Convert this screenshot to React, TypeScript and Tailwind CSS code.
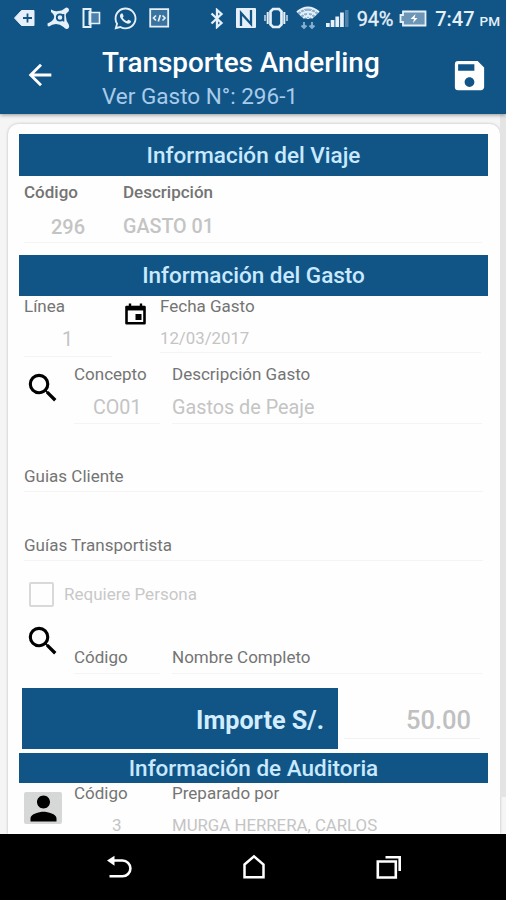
import React from 'react';
import clsx from 'clsx';
import { MdArrowBack, MdSave, MdSearch, MdPerson } from 'react-icons/md';
import { FaWhatsapp } from 'react-icons/fa';

interface FieldProps {
  label: string;
  value?: string;
  className?: string;
  labelClassName?: string;
  valueClassName?: string;
}

const Field: React.FC<FieldProps> = ({ label, value, className, labelClassName, valueClassName }) => (
  <div className={clsx('flex flex-col border-b border-[#f4f4f4] whitespace-nowrap', className)}>
    <span className={clsx('text-[17px] leading-5 text-[#747474]', labelClassName)}>{label}</span>
    {value && <span className={clsx('leading-6 text-[#c4c4c4]', valueClassName)}>{value}</span>}
  </div>
);

const SectionTitle: React.FC<{ title: string; className?: string }> = ({ title, className }) => (
  <h2
    className={clsx(
      'flex items-center justify-center bg-[#115587] pt-px text-[22.5px] font-medium text-[#c9e9ff] whitespace-nowrap',
      className
    )}
  >
    {title}
  </h2>
);

const StatusBar: React.FC = () => (
  <div className="flex h-9 items-center justify-between pl-[14px] pr-[6px] text-[#e6f0fa]">
    <div className="flex items-center">
      <svg className="h-5 w-[21px]" viewBox="0 0 21 20" fill="currentColor">
        <path d="M7.500 2.500H20v15H7.500L0.500 10z" stroke="currentColor" strokeLinejoin="round" />
        <path d="M13.500 5.500v9M9 10h9" stroke="#115587" strokeWidth="1.800" />
      </svg>
      <svg className="ml-[11px] h-6 w-6" viewBox="0 0 24 24">
        <path
          d="M5 3.500Q9 6 12 5Q16 5 18 3Q20 0.500 22 2Q24 4 22 6Q19 8 20 11Q20 15 22.500 18Q24 21 22 22.500Q20 24 17.500 21Q14 18 10 18Q6 18 3 20.500Q1 20 1.500 17.500Q7 15 8 12Q9 9 5 6z"
          fill="currentColor"
        />
        <circle cx="14" cy="11.500" r="3.200" fill="none" stroke="#115587" strokeWidth="1.800" />
        <path d="M17.500 8v7.500" stroke="#115587" strokeWidth="1.600" />
      </svg>
      <svg className="ml-3 h-[22px] w-[19px]" viewBox="0 0 19 22" fill="none" stroke="currentColor" strokeWidth="2">
        <path d="M8.500 5V2H1.500v18h7v-3" />
        <path d="M8.500 5.500h9v11h-9z" fill="#4a80ab" strokeWidth="1.600" />
        <path d="M7.500 4v14" />
      </svg>
      <FaWhatsapp className="ml-3 h-[25px] w-[25px]" />
      <svg className="ml-[11px] h-5 w-[21px]" viewBox="0 0 21 20" fill="none" stroke="currentColor" strokeWidth="1.800">
        <path d="M1.200 1.200h18v17.500h-18z" fill="#3b739f" />
        <path d="M7 7.500L4.500 10 7 12.500M13.500 7.500L16 10l-2.500 2.500M11.300 7l-2 6.500" strokeWidth="1.700" />
      </svg>
    </div>
    <div className="flex items-center">
      <svg className="h-[21px] w-[14px]" viewBox="0 0 14 21" fill="none" stroke="currentColor" strokeWidth="2.300">
        <path d="M1.500 5.500l10 9.500L7 19V2L11.500 6l-10 9.500" />
      </svg>
      <svg className="ml-[12px] h-5 w-5" viewBox="0 0 20 20">
        <rect width="20" height="20" rx="1" fill="currentColor" />
        <path d="M5 18V5l10 11V2" fill="none" stroke="#115587" strokeWidth="2.300" />
      </svg>
      <svg className="ml-[8px] h-[22px] w-6" viewBox="0 0 24 22" fill="none" stroke="currentColor">
        <path d="M9 2h6l2.500 2.500v13L15 20H9l-2.500-2.500v-13z" strokeWidth="2.700" />
        <path d="M3.700 5v12M20.300 5v12" strokeWidth="2" />
        <path d="M1 8v6M23 8v6" stroke="#a8c6de" strokeWidth="1.800" />
      </svg>
      <svg className="ml-[8px] h-6 w-6" viewBox="0 0 24 24" fill="none" stroke="currentColor">
        <path
          d="M0.500 6Q12-4 23.500 6L19 10.500Q16 13 12 13Q8 13 5 10.500z"
          fill="#8db1cd"
          stroke="none"
        />
        <path d="M1 6Q12-3 23 6M4 9Q12 2.500 20 9M7 12Q12 7.500 17 12" strokeWidth="1.800" />
        <path d="M3 4l9 9 9-9M7 3l8 8M17 3L9 11" strokeWidth="0.900" />
        <path d="M8 16v6M5.500 19.500L8 22l2.500-2.500M16 16v6M13.500 19.500L16 22l2.500-2.500" stroke="#86afd0" strokeWidth="1.900" />
      </svg>
      <svg className="ml-[6px] h-[18px] w-[23px]" viewBox="0 0 23 18" fill="currentColor">
        <path d="M0 14h3.700v4H0zM4.700 11h3.700v7H4.700zM9.400 7.500h3.700V18H9.400zM14.100 3.500h3.700V18h-3.700z" />
        <path d="M19 1h3.500v17H19z" fill="#4f82a9" />
      </svg>
      <span className="ml-[8px] pt-px text-[20px] leading-6 tracking-[-0.2px] [-webkit-text-stroke:0.3px]">94%</span>
      <svg className="ml-[6px] h-[17px] w-[28px]" viewBox="0 0 28 17">
        <path d="M4 1.500h22.500v14H4v-3.500H1.500V5H4z" fill="#6d95b5" stroke="currentColor" strokeWidth="1.800" />
        <path d="M16.500 4L11.500 9H15l-1 4L18.500 8h-3z" fill="#fff" />
      </svg>
      <span className="ml-[8px] pt-px text-[20px] font-medium leading-6">7:47</span>
      <span className="ml-[5px] pt-[5px] text-[13.500px] font-medium leading-5">PM</span>
    </div>
  </div>
);

const NavigationBar: React.FC = () => (
  <nav className="flex h-[66px] shrink-0 items-center justify-between bg-black pl-[106px] pr-[104px] text-white">
    <svg className="h-6 w-[26px]" viewBox="0 0 26 24" fill="none" stroke="currentColor" strokeWidth="2.600">
      <path d="M6 5.500h10.500a7.800 7.800 0 0 1 0 15.800H3.500" />
      <path d="M1 5.500L8.500 0.700v10z" fill="currentColor" stroke="none" />
    </svg>
    <svg className="h-[26px] w-6" viewBox="0 0 24 26" fill="none" stroke="currentColor" strokeWidth="2.500">
      <path d="M2.500 10.500L12 2.300l9.500 8.200v12.700h-19z" />
    </svg>
    <svg className="h-6 w-[26px]" viewBox="0 0 26 24" fill="none" stroke="currentColor" strokeWidth="2.600">
      <path d="M1.800 6.500h18v16h-18z" />
      <path d="M9.500 2.200h14.200V16" />
    </svg>
  </nav>
);

const App: React.FC = () => {
  return (
    <div className="flex h-[900px] w-[506px] flex-col overflow-hidden bg-[#f5f5f5] font-['Roboto',sans-serif]">
      <header className="z-10 h-[114px] shrink-0 bg-[#115587] shadow-[0_1px_4px_rgba(0,0,0,0.4)]">
        <StatusBar />
        <div className="flex h-[78px] items-center pl-[23px] pr-[17px]">
          <MdArrowBack className="h-[34px] w-[34px] text-white" />
          <div className="ml-[45px] flex flex-1 flex-col whitespace-nowrap pt-[7px]">
            <h1 className="text-[27.900px] font-medium leading-[34px] text-white">Transportes Anderling</h1>
            <p className="text-[22.500px] leading-[32px] text-[#a9cbea]">Ver Gasto N°: 296-1</p>
          </div>
          <MdSave className="h-[39px] w-[39px] text-white" />
        </div>
      </header>

      <div className="flex min-h-0 flex-1">
        <main className="mt-[10px] ml-[8px] w-[492px] overflow-hidden rounded-t-[10px] bg-[#fefefe] pt-[10px] pr-3 pl-[11px] shadow-[0_0_3px_rgba(0,0,0,0.25)]">
          <SectionTitle title="Información del Viaje" className="h-[42px]" />
          <div className="flex h-[79px] pl-[5px] pt-[6px]">
            <Field
              label="Código"
              value="296"
              className="h-[61px] w-[99px] gap-[13px]"
              labelClassName="font-medium"
              valueClassName="pl-[27px] text-[20px] font-medium"
            />
            <Field
              label="Descripción"
              value="GASTO 01"
              className="h-[61px] w-[359px] gap-[13px]"
              labelClassName="font-medium"
              valueClassName="text-[19.700px] font-medium"
            />
          </div>

          <SectionTitle title="Información del Gasto" className="h-[41px]" />
          <div className="flex h-[68px] pl-[5px]">
            <Field
              label="Línea"
              value="1"
              className="h-[61px] w-[88px] gap-[12px]"
              valueClassName="pl-[38px] text-[19.700px]"
            />
            <svg className="ml-[13px] mt-[7px] h-[22px] w-[21px] text-black" viewBox="0 0 21 22" fill="none" stroke="currentColor">
              <path d="M1.500 4h18v16.300h-18z" strokeWidth="2.600" strokeLinejoin="round" />
              <path d="M1 5.200h19" strokeWidth="4.500" />
              <path d="M5 0.500v4M16 0.500v4" strokeWidth="2.400" />
              <path d="M10.500 11h6v6h-6z" fill="currentColor" stroke="none" />
            </svg>
            <Field
              label="Fecha Gasto"
              value="12/03/2017"
              className="ml-[14px] h-[57px] w-[321px] gap-[10px]"
              valueClassName="text-[16.800px]"
            />
          </div>
          <div className="flex h-[102px] pl-[5px]">
            <MdSearch className="mt-[5px] h-[38px] w-[38px] text-black" />
            <Field
              label="Concepto"
              value="CO01"
              className="ml-[12px] h-[60px] w-[86px] gap-[12px]"
              valueClassName="pl-[19px] text-[19.700px]"
            />
            <Field
              label="Descripción Gasto"
              value="Gastos de Peaje"
              className="ml-[12px] h-[60px] w-[310px] gap-[12px]"
              valueClassName="text-[19.800px]"
            />
          </div>
          <div className="flex h-[115px] flex-col gap-[43px] pl-[5px]">
            <Field label="Guias Cliente" className="h-[26px] w-[459px]" />
            <Field label="Guías Transportista" className="h-[26px] w-[459px]" />
          </div>
          <label className="flex h-[27px] items-center pl-[10px]">
            <span className="h-[25px] w-[25px] rounded-xs border-2 border-[#d9d9d9]" />
            <span className="ml-[10px] text-[17px] text-[#c8c8c8]">Requiere Persona</span>
          </label>
          <div className="flex h-[80px] pl-[5px] pt-[14px]">
            <MdSearch className="h-[38px] w-[38px] text-black" />
            <Field label="Código" className="ml-[12px] mt-[25px] h-[27px] w-[86px]" />
            <Field label="Nombre Completo" className="ml-[12px] mt-[25px] h-[27px] w-[310px]" />
          </div>

          <div className="flex h-[65px] pl-[3px]">
            <div className="flex h-[61px] w-[316px] items-center justify-end bg-[#115587] pr-[14px] pt-1 text-[25.200px] font-bold text-[#d2edff]">
              Importe S/.
            </div>
            <div className="ml-[6px] flex h-[51px] w-[136px] items-center justify-end border-b border-[#f2f2f2] pr-[9px] pt-[14px] text-[25.500px] font-medium text-[#c0c0c0]">
              50.00
            </div>
          </div>
          <SectionTitle title="Información de Auditoria" className="h-[30px]" />
          <div className="flex pl-[5px]">
            <div className="mt-[9px] flex h-8 w-[38px] items-center justify-center rounded-xs bg-[#d6d7d7]">
              <MdPerson className="h-[39px] w-[39px] shrink-0 text-black" />
            </div>
            <Field
              label="Código"
              value="3"
              className="ml-[12px] w-[86px] gap-[10px]"
              valueClassName="pl-[38px] text-[17px]"
            />
            <Field
              label="Preparado por"
              value="MURGA HERRERA, CARLOS"
              className="ml-[12px] w-[304px] gap-[10px]"
              valueClassName="text-[16.800px]"
            />
          </div>
        </main>
        <div className="h-[683px] w-[6px] bg-[#e4e4e4]" />
      </div>

      <NavigationBar />
    </div>
  );
};

export default App;
